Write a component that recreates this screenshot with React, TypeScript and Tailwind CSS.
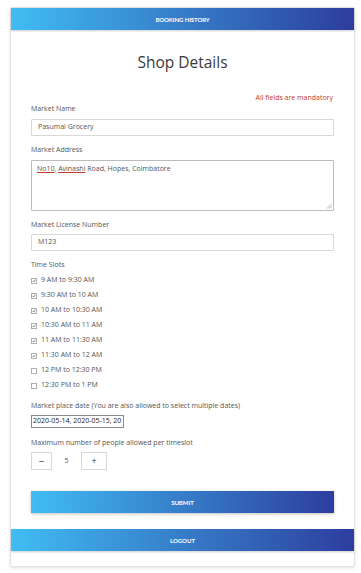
import React from "react";

const slots = [
  { t: "9 AM to 9:30 AM", c: true },
  { t: "9:30 AM to 10 AM", c: true },
  { t: "10 AM to 10:30 AM", c: true },
  { t: "10:30 AM to 11 AM", c: true },
  { t: "11 AM to 11:30 AM", c: true },
  { t: "11:30 AM to 12 AM", c: true },
  { t: "12 PM to 12:30 PM", c: false },
  { t: "12:30 PM to 1 PM", c: false },
];

function Box({ checked }: { checked: boolean }) {
  return (
    <span className="w-[6px] h-[6px] border border-[#b0b0b0] bg-white flex items-center justify-center">
      {checked && (
        <svg width="6" height="6" viewBox="0 0 6 6">
          <path d="M1 3 L2.5 4.5 L5 1.2" stroke="#444" strokeWidth="1" fill="none" />
        </svg>
      )}
    </span>
  );
}

export default function App() {
  return (
    <div className="w-[361px] h-[573px] bg-white pt-[7px] px-[10px]" style={{ fontFamily: '"Open Sans", "Noto Sans", sans-serif' }}>
      <div className="w-[345px] h-[560px] border border-[#e4e4e4] rounded-[2px] shadow-[0_1px_3px_rgba(0,0,0,0.12)] flex flex-col">
        <div className="h-[22px] bg-gradient-to-r from-[#40bdf3] to-[#2d3d9e] flex items-center justify-center shadow-[0_1px_2px_rgba(0,0,0,0.2)]">
          <span className="text-white text-[6px] font-bold tracking-[-0.1px]" style={{ fontFamily: 'Lato, sans-serif' }}>BOOKING HISTORY</span>
        </div>
        <div className="px-[20px] flex flex-col text-[#555]">
          <div className="h-[22px] mt-[22px] text-[15.5px] text-[#3a3a3a] flex items-center justify-center leading-none">Shop Details</div>
          <div className="mt-[19px] h-[10px] text-[7px] text-[#c0392b] text-right pr-[1px] leading-[10px]">All fields are mandatory</div>
          <div className="h-[10px] text-[7px] leading-[10px] mt-[1px]">Market Name</div>
          <div className="mt-[5px] h-[17px] border border-[#d8d8d8] rounded-[1px] flex items-center px-[6px] text-[7px]">Pasumai Grocery</div>
          <div className="mt-[9px] h-[10px] text-[7px] leading-[10px]">Market Address</div>
          <div className="relative mt-[5px] h-[51px] border border-[#bcbcbc] rounded-[1px] px-[5px] pt-[3px] text-[7px] leading-[10px]">
            <span className="underline decoration-[#c0392b]">No10</span>, <span className="underline decoration-[#c0392b]">Avinashi</span> Road, Hopes, Coimbatore
            <svg className="absolute right-[1px] bottom-[1px]" width="6" height="6" viewBox="0 0 6 6">
              <path d="M5.5 1 L1 5.5 M5.5 3.5 L3.5 5.5" stroke="#888" strokeWidth="0.7" />
            </svg>
          </div>
          <div className="mt-[9px] h-[10px] text-[7px] leading-[10px]">Market License Number</div>
          <div className="mt-[4px] h-[17px] border border-[#d8d8d8] rounded-[1px] flex items-center px-[6px] text-[7px]">M123</div>
          <div className="mt-[9px] h-[10px] text-[7px] leading-[10px]">Time Slots</div>
          <div className="mt-[3px] flex flex-col">
            {slots.map((s) => (
              <div key={s.t} className="h-[15px] flex items-center gap-[4px] text-[7px]">
                <Box checked={s.c} />
                <span>{s.t}</span>
              </div>
            ))}
          </div>
          <div className="mt-[8px] h-[10px] text-[7px] leading-[10px]">Market place date (You are also allowed to select multiple dates)</div>
          <div className="mt-[4px] w-[93px] h-[13px] border border-[#8a8a8a] flex items-center px-[1px] text-[7px] text-[#222] overflow-hidden whitespace-nowrap">2020-05-14, 2020-05-15, 20</div>
          <div className="mt-[10px] h-[10px] text-[7px] leading-[10px]">Maximum number of people allowed per timeslot</div>
          <div className="mt-[4px] flex items-center h-[18px]">
            <div className="w-[21px] h-[18px] border border-[#d8d8d8] flex items-center justify-center text-[10px] text-[#333]">−</div>
            <div className="w-[29px] text-center text-[7px]">5</div>
            <div className="w-[26px] h-[18px] border border-[#d8d8d8] flex items-center justify-center text-[9px] text-[#333]">+</div>
          </div>
          <div className="mt-[21px] h-[22px] bg-gradient-to-r from-[#40bdf3] to-[#2d3d9e] flex items-center justify-center shadow-[0_1px_3px_rgba(0,0,0,0.25)]">
            <span className="text-white text-[6px] font-bold" style={{ fontFamily: 'Lato, sans-serif' }}>SUBMIT</span>
          </div>
        </div>
        <div className="mt-[16px] h-[22px] bg-gradient-to-r from-[#40bdf3] to-[#2d3d9e] flex items-center justify-center shadow-[0_1px_2px_rgba(0,0,0,0.2)]">
          <span className="text-white text-[6px] font-bold" style={{ fontFamily: 'Lato, sans-serif' }}>LOGOUT</span>
        </div>
      </div>
    </div>
  );
}
